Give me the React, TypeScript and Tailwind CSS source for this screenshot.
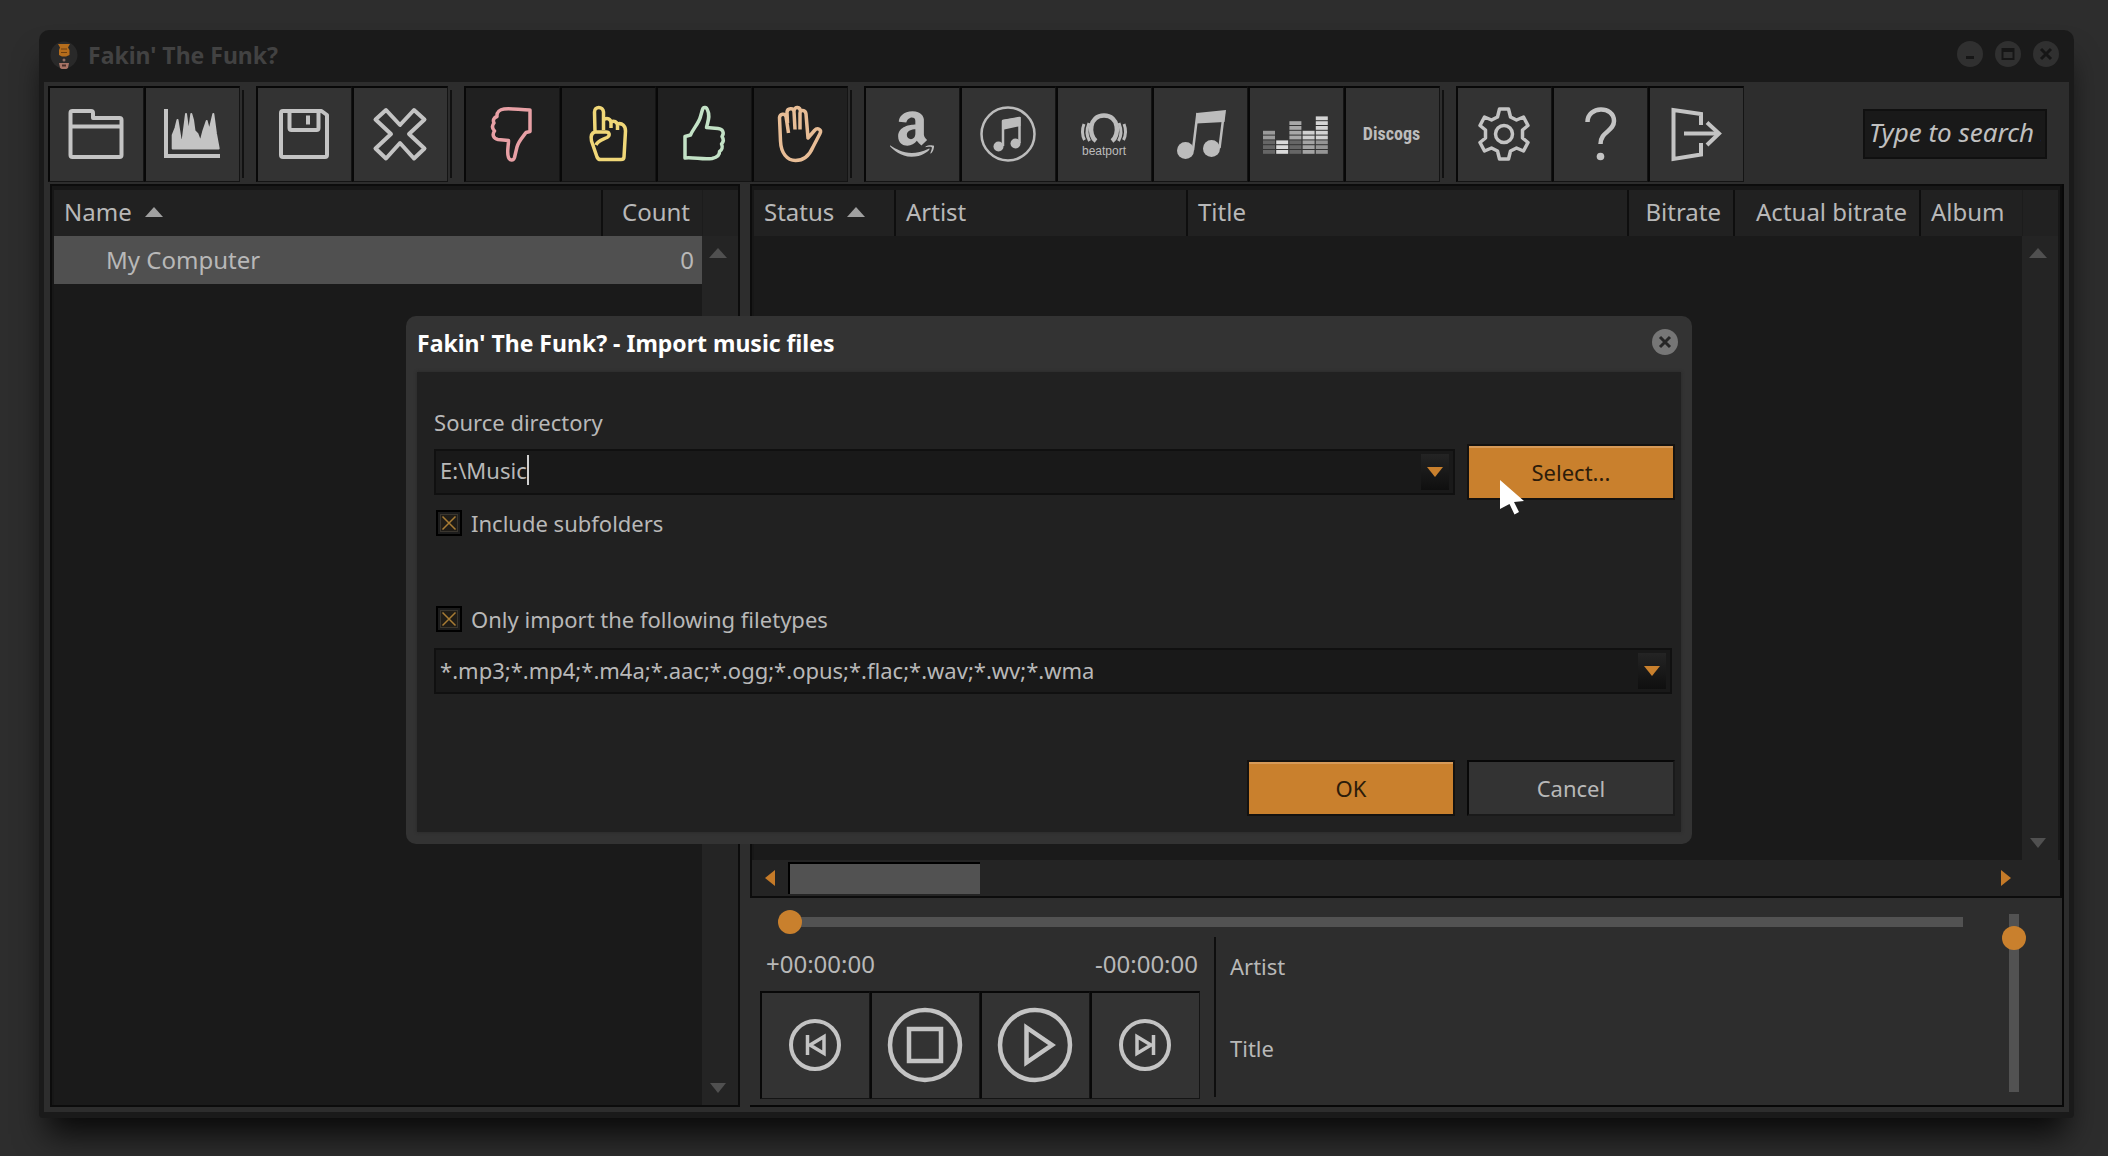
import React, { useState } from 'react';
import { FaAmazon } from 'react-icons/fa';

interface IconProps {
  className?: string;
}

interface ToolItem {
  label: string;
  icon: React.ReactNode;
}

interface ToolGroupProps {
  items: ToolItem[];
  dark?: boolean;
  last?: boolean;
}

const Glyph: React.FC<{ children: React.ReactNode; className?: string }> = ({ children, className = 'text-[#c4c4c4]' }) => (
  <svg
    viewBox="0 0 64 64"
    className={`w-16 h-16 overflow-visible ${className}`}
    fill="none"
    stroke="currentColor"
    strokeWidth="4"
    strokeLinejoin="round"
    aria-hidden="true"
  >
    {children}
  </svg>
);

const FolderIcon = () => (
  <Glyph>
    <path d="M6.5 53V11Q6.5 9 8.500 9H27Q29 9 29 11V16H55.500Q57.500 16 57.500 18V53Q57.500 55 55.500 55H8.500Q6.500 55 6.500 53Z M6.500 24.500H57.500" />
  </Glyph>
);

const SpectrumIcon = () => (
  <Glyph>
    <path d="M6 7V54H60" strokeLinejoin="miter" />
    <path
      d="M12.700 46.500V33L15.500 26L17.500 18L20.700 38H22.700L24.500 24L26 12L28.700 32L31.300 12L33 18L34.500 29L37.500 32L40.500 40L43.300 29L46.700 19L49.300 29L53.300 12L56 32L58.700 46.500Z"
      fill="currentColor"
      strokeWidth="2"
    />
  </Glyph>
);

const SaveIcon = () => (
  <Glyph>
    <path d="M11 9H49.500L55 13V53Q55 55 53 55H11Q9 55 9 53V11Q9 9 11 9Z" />
    <path d="M17.500 9V26Q17.500 28 19.500 28H44.500Q46.500 28 46.500 26V9M36 13.500V22.500" />
  </Glyph>
);

const DeleteIcon = () => (
  <Glyph>
    <path d="M18 8L32 23L46 8L56.500 17.500L41 32L56.500 46.500L46 56.500L32 41L18 56.500L7.500 46.500L23 32L7.500 17.500Z" />
  </Glyph>
);

const ThumbDownIcon = () => (
  <Glyph className="text-[#e8a0a5]">
    <path
      strokeWidth="3.500"
      d="M50 8V29.500L46 30.500C42 36 38.500 39 37 45L34.500 55.500C33.500 59 29.500 58.500 28.500 55.500C26.500 50 28.500 45 28.500 38.500L18 37.500C13 36.500 12 32.500 14.500 29C12 26.500 12 23.500 14 21C12.500 18 14 15.500 17 14.500C16.500 10 20 7.500 24 7C32 6 40 8 50 8Z"
    />
  </Glyph>
);

const FingerIcon = () => (
  <Glyph className="text-[#f0d778]">
    <path
      strokeWidth="3.500"
      d="M19 30L18.500 10C18.500 4 27 4 27.500 10V28M27.500 18C31 15 35 17 35 21V26M35 20C38 18 41 20 41.500 23V28M41.500 22C46 20.500 49.500 24 49.500 29L48 55Q48 57.500 45 57.500H24.500Q22 57.500 21 55L15.500 39C14.500 34 15 31 19 30H30C33.500 30 34.500 33.500 31 35.500C27 37.500 22 38 20 43"
    />
  </Glyph>
);

const ThumbUpIcon = () => (
  <Glyph className="text-[#c3e2c6]">
    <path
      strokeWidth="3.500"
      d="M13 34.500L18.500 33C21 27 27 21 28.500 14.500L30.500 7.500C31.500 4.500 34.500 5 35.500 8C38.500 14 36 19 34.500 25.500L46 26.500C51 27 52.500 31 50 34.500C52 37.500 51.500 40 49.500 42C51 45 50 48 47.500 49.500C48 54 44 55.500 40 56.500C31 58 22 55 13 56Z"
    />
  </Glyph>
);

const HandIcon = () => (
  <Glyph className="text-[#e8bd96]">
    <path
      strokeWidth="3.500"
      d="M20.500 31L18 14.500C17 11 12 11.500 11.500 15.500L12.500 39C13 51 19 58.500 27.500 58.500C37 58.500 42 52 45 45L52 31.500C54 27.500 49.500 25 46.500 28.500L40 36L38 12C37.500 7.500 32 7.500 32 11V27.500M27 27.500L26 9.500C25.500 5.500 19.500 6 19 10L19.500 21M26 9C26.500 4 32.500 4.500 32.500 10"
    />
  </Glyph>
);

const AmazonIcon = () => <FaAmazon className="w-[52px] h-[52px] text-[#bcbcbc]" aria-hidden="true" />;

const ItunesIcon = () => (
  <Glyph className="text-[#bcbcbc]">
    <circle cx="32" cy="32" r="26.500" strokeWidth="2.500" />
    <path d="M27 44V19L43.500 16V41" strokeWidth="2.500" />
    <path d="M26 18L44.500 15V24L26 28Z" fill="currentColor" stroke="none" />
    <circle cx="22.500" cy="44.500" r="5" fill="currentColor" stroke="none" />
    <circle cx="39.500" cy="41.500" r="5" fill="currentColor" stroke="none" />
  </Glyph>
);

const BeatportIcon = () => (
  <Glyph className="text-[#bcbcbc]">
    <path d="M24 39C16 33 17 13.500 32 13.500S48 33 40 39" strokeWidth="4.500" />
    <path d="M17.500 39C14.500 34 14.500 27 17 21M46.500 39C49.500 34 49.500 27 47 21M12.500 38C10 33 10 27 12 22M51.500 38C54 33 54 27 52 22" strokeWidth="3" />
    <text x="32" y="53" textAnchor="middle" fontSize="12" fontFamily="Liberation Sans, sans-serif" fill="currentColor" stroke="none">
      beatport
    </text>
  </Glyph>
);

const NoteIcon = () => (
  <Glyph className="text-[#bcbcbc]">
    <path d="M25 48L29.500 11M51.500 46L56 10" strokeWidth="2.500" />
    <path d="M28.500 11L58 8L56.500 20L28 21.500Z" fill="currentColor" stroke="none" />
    <circle cx="17.500" cy="48.500" r="8.500" fill="currentColor" stroke="none" />
    <circle cx="43.500" cy="46.500" r="8.500" fill="currentColor" stroke="none" />
  </Glyph>
);

// height, lit cells and the two tones of each equalizer column
const EQ_BARS = [
  { height: 5, lit: 2, on: '#9a9a9a', off: '#666666' },
  { height: 3, lit: 3, on: '#dadada', off: '#dadada' },
  { height: 7, lit: 4, on: '#a8a8a8', off: '#666666' },
  { height: 5, lit: 2, on: '#d0d0d0', off: '#a4a4a4' },
  { height: 8, lit: 5, on: '#d4d4d4', off: '#959595' },
];

const EqualizerIcon = () => (
  <Glyph>
    {EQ_BARS.map((bar, col) =>
      Array.from({ length: bar.height }, (_, row) => (
        <rect
          key={`${col}-${row}`}
          x={col * 13.2 - 1}
          y={48 - row * 4.8}
          width="12"
          height="3.800"
          stroke="none"
          fill={row >= bar.height - bar.lit ? bar.on : bar.off}
        />
      ))
    )}
  </Glyph>
);

const DiscogsIcon = () => (
  <span className="font-['Roboto_Condensed','Roboto',sans-serif] text-[18px] font-bold text-[#bcbcbc]">Discogs</span>
);

const GearIcon = () => (
  <Glyph>
    <path
      strokeWidth="3.500"
      d="M27.500 7H36.500L38.500 15L44.500 18L51.500 15L56 23.500L50.500 28V36L56 40.500L51.500 49L44.500 46L38.500 49L36.500 57H27.500L25.500 49L19.500 46L12.500 49L8 40.500L13.500 36V28L8 23.500L12.500 15L19.500 18L25.500 15Z"
    />
    <circle cx="32" cy="32" r="8.500" strokeWidth="3.500" />
  </Glyph>
);

const HelpIcon = () => (
  <Glyph>
    <path d="M19.500 20C19.500 3.500 46 3.500 46 19C46 29.500 32.500 29.500 32.500 42" strokeWidth="4.500" />
    <circle cx="32.500" cy="54.500" r="3.800" fill="currentColor" stroke="none" />
  </Glyph>
);

const ExitIcon = () => (
  <Glyph>
    <path d="M37 23V12L9.500 8V57L37 52.500V41" strokeLinejoin="miter" />
    <path d="M20 31.500H54" />
    <path d="M43 20.500L55 31.500L43 43" strokeLinejoin="miter" />
  </Glyph>
);

const Triangle: React.FC<{ dir: 'up' | 'down' | 'left' | 'right'; className?: string }> = ({ dir, className = '' }) => {
  const points = { up: '8,3 17,13 -1,13', down: '0,3 16,3 8,13', left: '3,8 13,0 13,16', right: '3,0 13,8 3,16' };
  return (
    <svg viewBox="0 0 16 16" className={`w-4 h-4 shrink-0 overflow-visible ${className}`} fill="currentColor" aria-hidden="true">
      <polygon points={points[dir]} />
    </svg>
  );
};

const AppIcon: React.FC<IconProps> = ({ className }) => (
  <svg viewBox="0 0 28 28" className={className} aria-hidden="true">
    <circle cx="14" cy="14" r="13.500" fill="#292929" />
    <path d="M8 3H20L18 6.500L19.500 9V14L16 15.500H12L9 14V9L10 6.500Z" fill="#b56d1c" />
    <path d="M11 8H17M11 11.500H17" stroke="#6d3f10" strokeWidth="1" />
    <circle cx="14" cy="19" r="1.500" fill="#8f6f66" />
    <path d="M9 22H19L18 27L14 29.500L10 27Z" fill="#a87466" />
    <path d="M12 24.500H16" stroke="#4a2e28" strokeWidth="2" />
  </svg>
);

const FILE_TOOLS: ToolItem[] = [
  { label: 'Import', icon: <FolderIcon /> },
  { label: 'Spectrum', icon: <SpectrumIcon /> },
];

const EDIT_TOOLS: ToolItem[] = [
  { label: 'Save', icon: <SaveIcon /> },
  { label: 'Remove', icon: <DeleteIcon /> },
];

const RATING_TOOLS: ToolItem[] = [
  { label: 'Bad', icon: <ThumbDownIcon /> },
  { label: 'Warning', icon: <FingerIcon /> },
  { label: 'Good', icon: <ThumbUpIcon /> },
  { label: 'Unknown', icon: <HandIcon /> },
];

const STORE_TOOLS: ToolItem[] = [
  { label: 'Amazon', icon: <AmazonIcon /> },
  { label: 'iTunes', icon: <ItunesIcon /> },
  { label: 'Beatport', icon: <BeatportIcon /> },
  { label: 'Music', icon: <NoteIcon /> },
  { label: 'Deezer', icon: <EqualizerIcon /> },
  { label: 'Discogs', icon: <DiscogsIcon /> },
];

const APP_TOOLS: ToolItem[] = [
  { label: 'Settings', icon: <GearIcon /> },
  { label: 'Help', icon: <HelpIcon /> },
  { label: 'Exit', icon: <ExitIcon /> },
];

const ToolGroup: React.FC<ToolGroupProps> = ({ items, dark = false, last = false }) => (
  <div className="flex">
    {items.map((item) => (
      <button
        key={item.label}
        aria-label={item.label}
        className={`w-24 h-24 pr-[2px] pb-[2px] flex items-center justify-center border-t-2 border-l-2 border-b border-r border-t-[#080808] border-l-[#080808] border-b-[#141414] border-r-[#141414] ${
          dark ? 'bg-[#202020]' : 'bg-[#333333]'
        }`}
      >
        {item.icon}
      </button>
    ))}
    {!last && <div className="w-[2px] ml-[2px] mr-3 my-1 bg-[#111111]" />}
  </div>
);

const Toolbar = () => (
  <div className="flex items-center justify-between pt-1 pl-1 pr-[22px] pb-[2px]">
    <div className="flex">
      <ToolGroup items={FILE_TOOLS} />
      <ToolGroup items={EDIT_TOOLS} />
      <ToolGroup items={RATING_TOOLS} dark />
      <ToolGroup items={STORE_TOOLS} />
      <ToolGroup items={APP_TOOLS} last />
    </div>
    <input
      type="text"
      aria-label="Search"
      placeholder="Type to search ..."
      className="w-46 h-[50px] pl-1 pr-1 pb-1 bg-[#191919] border-2 border-[#101010] italic text-[26px] placeholder-[#c0c0c0] outline-none"
    />
  </div>
);

const TitleBar = () => (
  <div className="flex items-center justify-between h-[52px] pb-[2px] pl-[6px] pr-[10px]">
    <div className="flex items-center gap-[10px]">
      <AppIcon className="w-7 h-7" />
      <h1 className="text-[23px] font-bold text-[#424242]">Fakin' The Funk?</h1>
    </div>
    <div className="flex gap-3 pb-[2px]">
      <button aria-label="Minimize" className="w-[26px] h-[26px] rounded-full bg-[#303030] flex items-center justify-center">
        <svg viewBox="0 0 14 14" className="w-[14px] h-[14px]" stroke="#161616" strokeWidth="3"><path d="M3 10.500H11" /></svg>
      </button>
      <button aria-label="Maximize" className="w-[26px] h-[26px] rounded-full bg-[#303030] flex items-center justify-center">
        <svg viewBox="0 0 14 14" className="w-[14px] h-[14px]" fill="none" stroke="#161616" strokeWidth="2"><path d="M1.500 2H12.500V12H1.500ZM2 4H12" /></svg>
      </button>
      <button aria-label="Close" className="w-[26px] h-[26px] rounded-full bg-[#303030] flex items-center justify-center">
        <svg viewBox="0 0 14 14" className="w-[14px] h-[14px]" stroke="#161616" strokeWidth="3"><path d="M2 2L12 12M12 2L2 12" /></svg>
      </button>
    </div>
  </div>
);

const VerticalScroll = () => (
  <div className="w-9 shrink-0 flex flex-col">
    <div className="h-[46px] bg-[#212121] border-l border-[#1c1c1c]" />
    <div className="flex-1 flex flex-col items-center justify-between py-[9px] pr-1 bg-[#242424] text-[#505050]">
      <Triangle dir="up" />
      <Triangle dir="down" />
    </div>
  </div>
);

const headCell = 'h-[46px] px-[10px] pb-[2px] bg-[#212121] border-r-2 border-[#0e0e0e] text-left font-normal whitespace-nowrap';
const headCellRight = 'h-[46px] pr-3 pb-[2px] bg-[#212121] border-r-2 border-[#0e0e0e] text-right font-normal whitespace-nowrap';

const FolderTree = () => (
  <section className="w-[690px] flex border-2 border-[#0c0c0c] bg-[#1a1a1a]">
    <div className="flex-1 flex border-2 border-r-0 border-b-0 border-t-4 border-[#171717]">
      <div className="flex-1">
        <table className="w-full table-fixed border-collapse text-[24px]">
          <colgroup>
            <col />
            <col className="w-[100px]" />
          </colgroup>
          <thead>
            <tr>
              <th className={headCell}>
                <span className="flex items-center gap-[14px]">
                  Name <Triangle dir="up" className="text-[#a0a0a0]" />
                </span>
              </th>
              <th className="h-[46px] pr-3 pb-[2px] bg-[#212121] text-right font-normal">Count</th>
            </tr>
          </thead>
          <tbody>
            <tr className="bg-[#505050]">
              <td className="h-12 pl-[52px]">My Computer</td>
              <td className="h-12 pr-2 text-right">0</td>
            </tr>
          </tbody>
        </table>
      </div>
      <VerticalScroll />
    </div>
  </section>
);

const TrackList = () => (
  <section className="flex-1 flex flex-col border-2 border-[#0c0c0c] bg-[#1a1a1a]">
    <div className="flex-1 flex border-2 border-b-0 border-t-4 border-[#171717]">
      <div className="flex-1">
        <table className="w-full table-fixed border-collapse text-[24px]">
          <colgroup>
            <col className="w-[141px]" />
            <col className="w-[292px]" />
            <col />
            <col className="w-[106px]" />
            <col className="w-[186px]" />
            <col className="w-[102px]" />
          </colgroup>
          <thead>
            <tr>
              <th className={headCell}>
                <span className="flex items-center gap-[14px]">
                  Status <Triangle dir="up" className="text-[#a0a0a0]" />
                </span>
              </th>
              <th className={headCell}>Artist</th>
              <th className={headCell}>Title</th>
              <th className={headCellRight}>Bitrate</th>
              <th className={headCellRight}>Actual bitrate</th>
              <th className="h-[46px] pl-[10px] pb-[2px] bg-[#212121] text-left font-normal">Album</th>
            </tr>
          </thead>
        </table>
      </div>
      <VerticalScroll />
    </div>
    <div className="h-9 pl-[10px] pr-[46px] flex items-center justify-between bg-[#242424] text-[#c57a28]">
      <div className="flex items-center gap-[10px]">
        <Triangle dir="left" />
        <div className="w-48 h-8 bg-[#525252] border-t-2 border-l-2 border-black" />
      </div>
      <Triangle dir="right" />
    </div>
  </section>
);

const Player = () => {
  const [position, setPosition] = useState(0);
  const [volume, setVolume] = useState(92);
  const playerButton =
    'w-[110px] h-[108px] pr-[2px] pb-[2px] flex items-center justify-center border-t-2 border-l-2 border-b border-r border-t-[#080808] border-l-[#080808] border-b-[#141414] border-r-[#141414] bg-[#333333] text-[#c4c4c4]';

  return (
    <section className="h-[207px] flex">
      <div className="flex-1 pt-3 pl-[10px]">
        <div className="pl-[18px]">
          <input
            type="range"
            aria-label="Position"
            value={position}
            onChange={(e) => setPosition(Number(e.target.value))}
            className="block w-full h-6 appearance-none bg-transparent [&::-webkit-slider-runnable-track]:h-[10px] [&::-webkit-slider-runnable-track]:bg-[linear-gradient(to_right,transparent_12px,#525252_12px)] [&::-webkit-slider-thumb]:appearance-none [&::-webkit-slider-thumb]:w-6 [&::-webkit-slider-thumb]:h-6 [&::-webkit-slider-thumb]:-mt-[7px] [&::-webkit-slider-thumb]:rounded-full [&::-webkit-slider-thumb]:bg-[#c9802d]"
          />
        </div>
        <div className="flex pt-[3px]">
          <div className="w-[440px]">
            <div className="h-[54px] pl-[6px] pr-[2px] flex items-center justify-between text-[24px]">
              <span>+00:00:00</span>
              <span>-00:00:00</span>
            </div>
            <div className="flex">
              <button aria-label="Previous" className={playerButton}>
                <svg viewBox="0 0 80 80" className="w-20 h-20" fill="none" stroke="currentColor" strokeWidth="4">
                  <circle cx="40" cy="40" r="24" />
                  <path d="M32.500 30V50M49 31.500V48.500L35 40Z" strokeWidth="3.500" />
                </svg>
              </button>
              <button aria-label="Stop" className={playerButton}>
                <svg viewBox="0 0 80 80" className="w-20 h-20" fill="none" stroke="currentColor" strokeWidth="4.500">
                  <circle cx="40" cy="40" r="35" />
                  <rect x="24" y="24" width="32" height="32" />
                </svg>
              </button>
              <button aria-label="Play" className={playerButton}>
                <svg viewBox="0 0 80 80" className="w-20 h-20" fill="none" stroke="currentColor" strokeWidth="4.500">
                  <circle cx="40" cy="40" r="35" />
                  <path d="M31.500 22.500L57 40L31.500 57.500Z" />
                </svg>
              </button>
              <button aria-label="Next" className={playerButton}>
                <svg viewBox="0 0 80 80" className="w-20 h-20" fill="none" stroke="currentColor" strokeWidth="4">
                  <circle cx="40" cy="40" r="24" />
                  <path d="M48.500 30V50M32 31.500V48.500L46 40Z" strokeWidth="3.500" />
                </svg>
              </button>
            </div>
          </div>
          <div className="w-[2px] h-40 ml-[14px] bg-[#0e0e0e]" />
          <div className="flex-1 pl-[14px]">
            <p className="h-[58px] flex items-center">Artist</p>
            <p className="h-[58px] mt-6 flex items-center">Title</p>
          </div>
        </div>
      </div>
      <input
        type="range"
        aria-label="Volume"
        value={volume}
        onChange={(e) => setVolume(Number(e.target.value))}
        className="block w-6 h-[178px] mt-4 ml-[39px] mr-[36px] appearance-none bg-transparent [writing-mode:vertical-lr] [direction:rtl] [&::-webkit-slider-runnable-track]:w-[10px] [&::-webkit-slider-runnable-track]:bg-[#525252] [&::-webkit-slider-thumb]:appearance-none [&::-webkit-slider-thumb]:w-6 [&::-webkit-slider-thumb]:h-6 [&::-webkit-slider-thumb]:-ml-[7px] [&::-webkit-slider-thumb]:rounded-full [&::-webkit-slider-thumb]:bg-[#c9802d]"
      />
    </section>
  );
};

interface CheckFieldProps {
  label: string;
  checked: boolean;
  onChange: (checked: boolean) => void;
}

const CheckField: React.FC<CheckFieldProps> = ({ label, checked, onChange }) => (
  <label className="flex items-center gap-[9px] h-[30px] pl-[2px]">
    <span className="relative w-[26px] h-[26px] border-2 border-black bg-[#1c1c1c] p-[2px]">
      <input
        type="checkbox"
        checked={checked}
        onChange={(e) => onChange(e.target.checked)}
        className="block w-full h-full appearance-none border border-[#3a362f] bg-[#1f1c17]"
      />
      {checked && (
        <svg viewBox="0 0 22 22" className="absolute inset-0 w-full h-full pointer-events-none" stroke="#a87c34" strokeWidth="1.500">
          <path d="M4.500 4.500L17.500 17.500M17.500 4.500L4.500 17.500" />
        </svg>
      )}
    </span>
    {label}
  </label>
);

const comboArrow = 'w-7 h-9 flex items-center justify-center bg-linear-to-b from-[#242424] to-[#0f0f0f] text-[#c9802d]';
const orangeButton = 'w-[208px] h-14 bg-[#c9802d] border-2 border-[#141210] text-[#2c1c0a] shadow-[inset_0_2px_0_#d69a58]';

const ImportDialog = () => {
  const [directory, setDirectory] = useState('E:\\Music');
  const [subfolders, setSubfolders] = useState(true);
  const [filterTypes, setFilterTypes] = useState(true);

  return (
    <div role="dialog" aria-labelledby="dialog-title" className="w-[61vw] px-[11px] pb-3 rounded-[10px] bg-[#333333]">
      <div className="h-14 pb-[2px] flex items-center justify-between pr-[3px]">
        <h2 id="dialog-title" className="text-[23px] font-bold text-white">Fakin' The Funk? - Import music files</h2>
        <button aria-label="Close dialog" className="w-[26px] h-[26px] mb-[2px] rounded-full bg-[#767676] flex items-center justify-center">
          <svg viewBox="0 0 14 14" className="w-[14px] h-[14px]" stroke="#262626" strokeWidth="3"><path d="M2 2L12 12M12 2L2 12" /></svg>
        </button>
      </div>
      <div className="pt-9 pl-[17px] pr-[6px] pb-4 bg-[#212121] shadow-[0_0_3px_#282828]">
        <label htmlFor="source" className="block h-7 leading-7">Source directory</label>
        <div className="mt-2 flex items-center gap-3">
          <div className="flex-1 h-[46px] pl-1 pr-1 flex items-center bg-[#191919] border-2 border-[#101010]">
            <div className="flex-1 flex items-center pb-1">
              <input
                id="source"
                type="text"
                value={directory}
                onChange={(e) => setDirectory(e.target.value)}
                className="field-sizing-content bg-transparent outline-none"
              />
              <span className="w-[2px] h-[30px] bg-[#d0d0d0]" />
            </div>
            <button aria-label="Recent directories" className={comboArrow}>
              <Triangle dir="down" />
            </button>
          </div>
          <div className="relative">
            <button className={orangeButton}>Select...</button>
            <svg viewBox="0 0 28 36" className="absolute left-8 top-9 w-7 h-9 pointer-events-none" fill="#ffffff" aria-hidden="true">
              <path d="M1 0L25 21L15 22L20 32L15.500 34.500L10.500 24L1 29Z" />
            </svg>
          </div>
        </div>
        <div className="mt-2">
          <CheckField label="Include subfolders" checked={subfolders} onChange={setSubfolders} />
        </div>
        <div className="mt-[66px]">
          <CheckField label="Only import the following filetypes" checked={filterTypes} onChange={setFilterTypes} />
        </div>
        <div className="relative mt-[14px] mr-[3px]">
          <select
            aria-label="Filetypes"
            className="block w-full h-[46px] pl-1 pb-[2px] appearance-none bg-[#191919] border-2 border-[#101010] outline-none"
          >
            <option>*.mp3;*.mp4;*.m4a;*.aac;*.ogg;*.opus;*.flac;*.wav;*.wv;*.wma</option>
          </select>
          <span className={`absolute right-[6px] top-[5px] pointer-events-none ${comboArrow}`}>
            <Triangle dir="down" />
          </span>
        </div>
        <div className="mt-[66px] flex justify-end gap-3">
          <button className={orangeButton}>OK</button>
          <button className="w-[208px] h-14 bg-[#333333] border-2 border-t-[#080808] border-l-[#080808] border-b-[#1a1a1a] border-r-[#1a1a1a]">Cancel</button>
        </div>
      </div>
    </div>
  );
};

export default function App() {
  return (
    <div className="relative min-h-screen flex flex-col pt-[30px] pb-[38px] pl-[39px] pr-[34px] bg-[#2d2d2d] font-['Noto_Sans',sans-serif] text-[22px] text-[#b8b8b8] overflow-hidden">
      <main className="flex-1 flex flex-col rounded-t-[10px] rounded-b bg-[#1a1a1a] px-[5px] pb-[6px] shadow-[0_24px_32px_-8px_rgba(0,0,0,0.8)]">
        <TitleBar />
        <div className="flex-1 flex flex-col bg-[#2d2d2d]">
          <Toolbar />
          <div className="flex-1 flex gap-[10px] pl-[6px] pr-[5px] pb-[5px]">
            <FolderTree />
            <div className="flex-1 flex flex-col border-r-2 border-b-2 border-[#080808]">
              <TrackList />
              <Player />
            </div>
          </div>
        </div>
      </main>
      <div className="absolute inset-0 flex items-center justify-center pr-[10px] pt-1">
        <ImportDialog />
      </div>
    </div>
  );
}
